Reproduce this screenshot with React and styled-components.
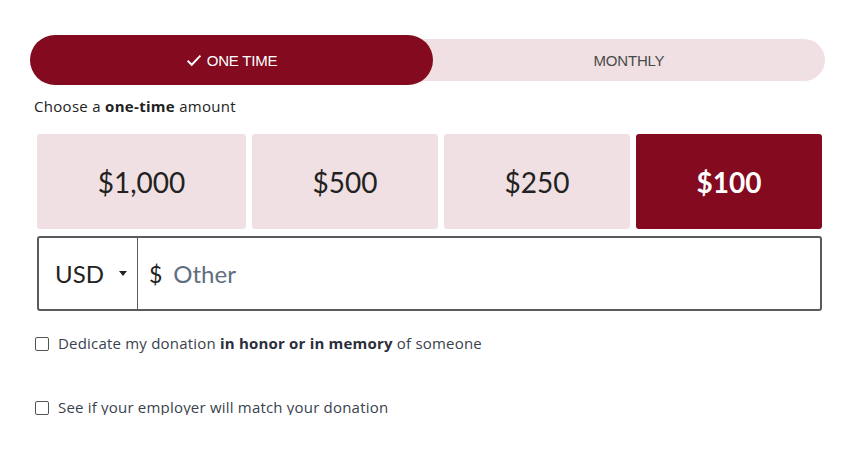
import React, { useState } from "react";
import styled, { createGlobalStyle } from "styled-components";

const GlobalStyle = createGlobalStyle`
  body {
    margin: 0;
    background: #ffffff;
    font-family: Lato, "Noto Sans", sans-serif;
  }
`;

const MAROON = "#840a1f";
const PINK = "#f0e0e3";
const TEXT_FONT = `"Open Sans", Lato, sans-serif`;

const Page = styled.div`
  width: 795px;
  padding: 35px 0 0 30px;
`;

const Toggle = styled.div`
  display: flex;
  align-items: center;
  height: 50px;
`;

const Track = styled.div`
  flex: 1;
  display: flex;
  align-items: center;
  height: 42px;
  background: ${PINK};
  border-radius: 21px;
`;

const Tab = styled.button`
  border: none;
  cursor: pointer;
  font-family: "Liberation Sans", Arial, sans-serif;
  font-size: 15px;
  letter-spacing: -0.2px;
  display: flex;
  align-items: center;
  justify-content: center;
  gap: 5px;
  height: ${(p) => (p.$active ? "50px" : "42px")};
  width: ${(p) => (p.$active ? "403px" : "auto")};
  flex: ${(p) => (p.$active ? "none" : "1")};
  border-radius: 25px;
  background: ${(p) => (p.$active ? MAROON : "transparent")};
  color: ${(p) => (p.$active ? "#ffffff" : "#4a4a4a")};
  padding: 0;
`;

const Prompt = styled.p`
  margin: 13px 0 0 4px;
  font-family: ${TEXT_FONT};
  font-size: 15px;
  letter-spacing: 0.3px;
  line-height: 17px;
  color: #222;
  b {
    font-weight: 700;
  }
`;

const Amounts = styled.div`
  display: grid;
  grid-template-columns: 209px repeat(3, 1fr);
  gap: 6px;
  margin: 19px 3px 0 7px;
`;

const Amount = styled.button`
  height: 95px;
  border: none;
  border-radius: 3px;
  cursor: pointer;
  font-family: Lato, "Noto Sans", sans-serif;
  font-size: 28px;
  font-weight: ${(p) => (p.$selected ? 700 : 400)};
  background: ${(p) => (p.$selected ? MAROON : PINK)};
  color: ${(p) => (p.$selected ? "#ffffff" : "#222")};
`;

const OtherRow = styled.div`
  display: flex;
  height: 75px;
  margin: 7px 3px 0 7px;
  border: 2px solid #5a5a5a;
  border-radius: 3px;
  box-sizing: border-box;
`;

const Currency = styled.div`
  width: 99px;
  display: flex;
  align-items: center;
  gap: 15px;
  padding-left: 16px;
  box-sizing: border-box;
  border-right: 1px solid #5a5a5a;
  font-size: 24px;
  color: #222;
`;

const Caret = styled.span`
  width: 0;
  height: 0;
  border-left: 4px solid transparent;
  border-right: 4px solid transparent;
  border-top: 5px solid #222;
`;

const InputWrap = styled.div`
  flex: 1;
  display: flex;
  align-items: center;
  padding-left: 11px;
  font-size: 23px;
  color: #222;
`;

const Input = styled.input`
  flex: 1;
  border: none;
  outline: none;
  margin-left: 9px;
  font-family: inherit;
  font-size: 24px;
  color: #222;
  background: transparent;
  &::placeholder {
    color: #5f6e80;
  }
`;

const Checks = styled.div`
  display: flex;
  flex-direction: column;
  gap: 49px;
  margin: 25px 0 0 5px;
`;

const CheckLabel = styled.label`
  display: flex;
  align-items: center;
  gap: 9px;
  font-family: ${TEXT_FONT};
  font-size: 15px;
  letter-spacing: 0.2px;
  line-height: 15px;
  color: #3a3f4e;
  cursor: pointer;
  b {
    font-weight: 700;
    color: #2b2f3b;
  }
`;

const Box = styled.input`
  appearance: none;
  margin: 0;
  width: 14px;
  height: 14px;
  border: 1px solid #555;
  border-radius: 2px;
  background: #fff;
  box-sizing: border-box;
`;

const Check = () => (
  <svg width="16" height="13" viewBox="0 0 15 12" fill="none">
    <path d="M1.5 6.2 L5.4 10 L13.5 1.5" stroke="#fff" strokeWidth="1.8" />
  </svg>
);

export default function App() {
  const [freq, setFreq] = useState("once");
  const [amount, setAmount] = useState(100);
  const amounts = [1000, 500, 250, 100];

  return (
    <Page>
      <GlobalStyle />
      <Toggle>
        <Track>
          <Tab $active={freq === "once"} onClick={() => setFreq("once")}>
            {freq === "once" && <Check />}
            ONE TIME
          </Tab>
          <Tab $active={freq === "monthly"} onClick={() => setFreq("monthly")}>
            MONTHLY
          </Tab>
        </Track>
      </Toggle>
      <Prompt>
        Choose a <b>one-time</b> amount
      </Prompt>
      <Amounts>
        {amounts.map((a) => (
          <Amount key={a} $selected={amount === a} onClick={() => setAmount(a)}>
            ${a.toLocaleString("en-US")}
          </Amount>
        ))}
      </Amounts>
      <OtherRow>
        <Currency>
          USD <Caret />
        </Currency>
        <InputWrap>
          $<Input placeholder="Other" />
        </InputWrap>
      </OtherRow>
      <Checks>
        <CheckLabel>
          <Box type="checkbox" />
          <span>
            Dedicate my donation <b>in honor or in memory</b> of someone
          </span>
        </CheckLabel>
        <CheckLabel>
          <Box type="checkbox" />
          <span>See if your employer will match your donation</span>
        </CheckLabel>
      </Checks>
    </Page>
  );
}
